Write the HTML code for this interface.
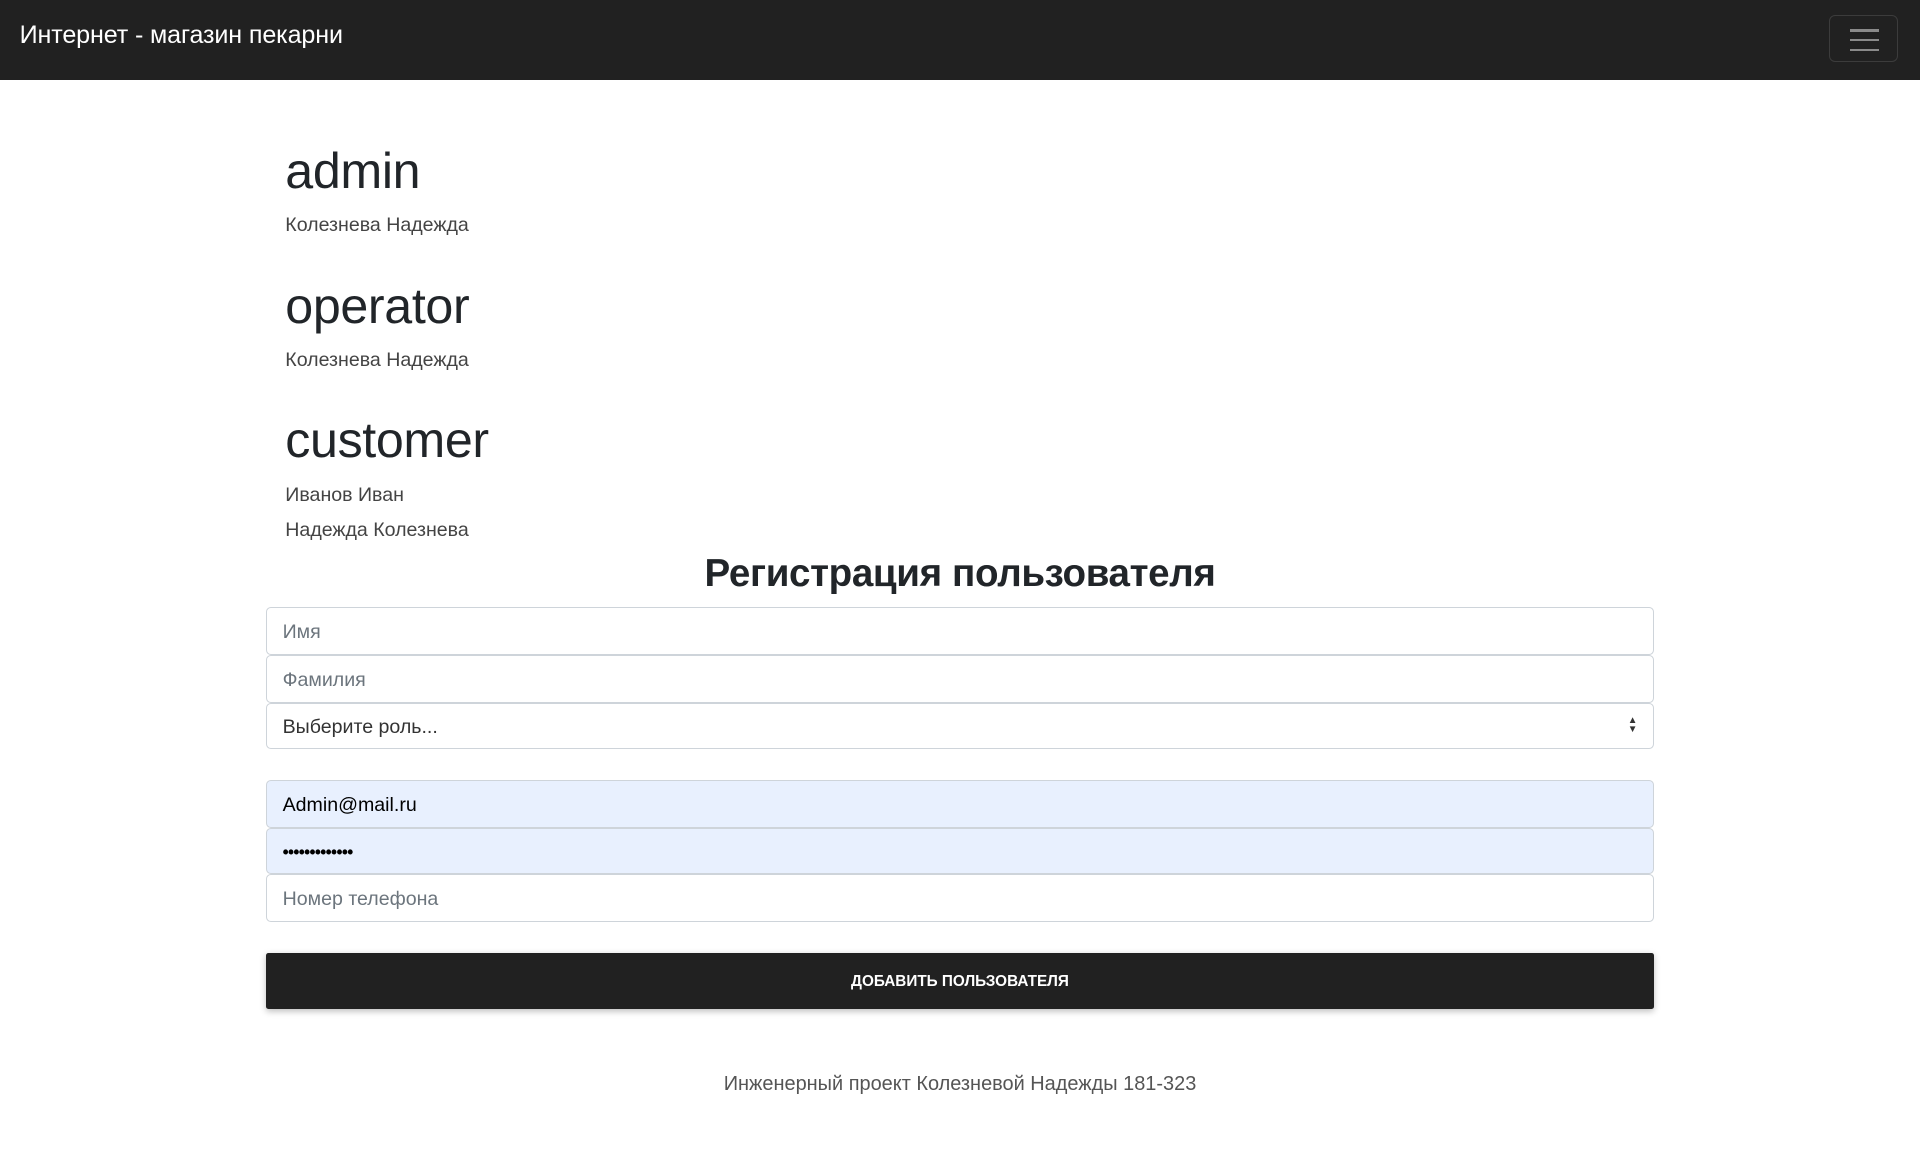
<!DOCTYPE html>
<html><head><meta charset="utf-8">
<style>
html{zoom:1.2245}
body{margin:0;font-family:"Liberation Sans",Arial,sans-serif;background:#fff;color:#212529;width:1568px;height:947px;overflow:hidden}
.nav{height:65px;background:#212121;position:relative}
.brand{position:absolute;left:16px;top:17px;color:#fff;font-size:20.5px;letter-spacing:-0.1px}
.tog{position:absolute;left:1494px;top:12px;width:56px;height:39px;border:1px solid rgba(255,255,255,.12);border-radius:5px;box-sizing:border-box}
.tog i{position:absolute;left:16px;width:24px;height:2px;background:#8a8a8a}
.role{position:absolute;left:233px;font-size:41px;font-weight:300;color:#212529;letter-spacing:-0.3px}
.nm{position:absolute;left:233px;font-size:16px;color:#444}
h2{position:absolute;left:0;width:1568px;text-align:center;top:451px;margin:0;font-size:31.5px;font-weight:bold;color:#212529;letter-spacing:-0.3px}
.in{position:absolute;left:217px;width:1134px;box-sizing:border-box;border:1px solid #ced4da;border-radius:4px;background:#fff;font-size:16px;color:#6c757d;padding-left:13px;padding-top:2px;display:flex;align-items:center}
.af{background:#e8f0fe;color:#000}
.btn{position:absolute;left:217px;top:778px;width:1134px;height:46px;background:#212121;color:#fff;font-size:12.5px;font-weight:bold;display:flex;align-items:center;justify-content:center;box-shadow:0 2px 5px rgba(0,0,0,.25);border-radius:2px;padding-top:2px;box-sizing:border-box}
.foot{position:absolute;left:0;width:1568px;text-align:center;top:876px;font-size:16.3px;color:#555}
</style></head><body>
<div class="nav"><div class="brand">Интернет - магазин пекарни</div>
<div class="tog"><i style="top:11px"></i><i style="top:19px"></i><i style="top:27px"></i></div></div>
<div class="role" style="top:116px">admin</div>
<div class="nm" style="top:175px">Колезнева Надежда</div>
<div class="role" style="top:226px">operator</div>
<div class="nm" style="top:285px">Колезнева Надежда</div>
<div class="role" style="top:336px">customer</div>
<div class="nm" style="top:395px">Иванов Иван</div>
<div class="nm" style="top:424px">Надежда Колезнева</div>
<h2>Регистрация пользователя</h2>
<div class="in" style="top:496px;height:39px">Имя</div>
<div class="in" style="top:535px;height:39px">Фамилия</div>
<div class="in" style="top:574px;height:38px;color:#333">Выберите роль...<span style="position:absolute;right:13px;top:11px;font-size:8px;line-height:7px;color:#333">▲<br>▼</span></div>
<div class="in af" style="top:637px;height:39px">Admin@mail.ru</div>
<div class="in af" style="top:676px;height:38px;font-size:14px;letter-spacing:-0.5px;font-weight:bold">•••••••••••••</div>
<div class="in" style="top:714px;height:39px">Номер телефона</div>
<div class="btn">ДОБАВИТЬ ПОЛЬЗОВАТЕЛЯ</div>
<div class="foot">Инженерный проект Колезневой Надежды 181-323</div>
</body></html>
